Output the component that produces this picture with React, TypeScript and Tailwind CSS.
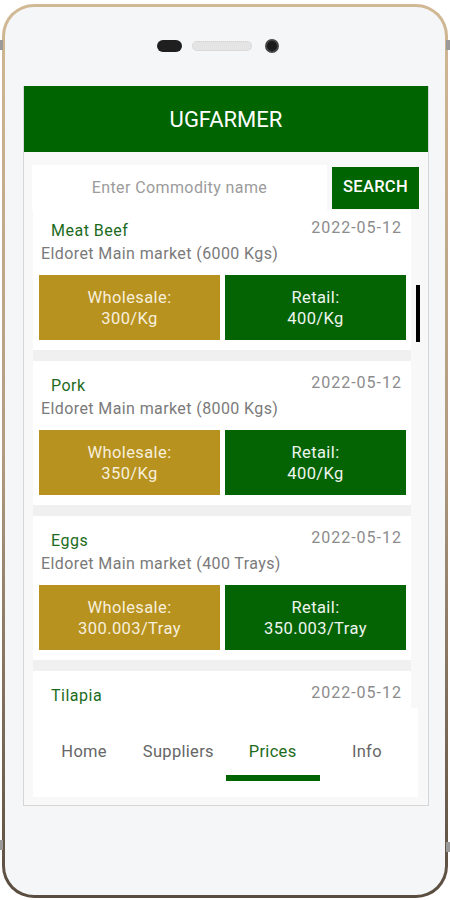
import React from "react";

type Item = {
  name: string;
  market: string;
  wholesale: string;
  retail: string;
  date: string;
};

const items: Item[] = [
  { name: "Meat Beef", market: "Eldoret Main market (6000 Kgs)", wholesale: "300/Kg", retail: "400/Kg", date: "2022-05-12" },
  { name: "Pork", market: "Eldoret Main market (8000 Kgs)", wholesale: "350/Kg", retail: "400/Kg", date: "2022-05-12" },
  { name: "Eggs", market: "Eldoret Main market (400 Trays)", wholesale: "300.003/Tray", retail: "350.003/Tray", date: "2022-05-12" },
  { name: "Tilapia", market: "Eldoret Main market (500 Kgs)", wholesale: "250/Kg", retail: "300/Kg", date: "2022-05-12" },
];

function Card({ item }: { item: Item }) {
  return (
    <div className="h-[144px] shrink-0 bg-white flex flex-col">
      <div className="flex justify-between items-start pt-[12px]">
        <span className="mt-[3px] pl-[18px] text-[16px] leading-[20px] text-[#1c6b1c] tracking-[0.5px]">{item.name}</span>
        <span className="pr-[9px] text-[16px] leading-[20px] text-[#8c8c8c] tracking-[1px]">{item.date}</span>
      </div>
      <div className="mt-[3px] pl-[8px] text-[16px] leading-[20px] text-[#7a7a7a] tracking-[0.4px]">{item.market}</div>
      <div className="mt-[11px] pl-[6px] pr-[5px] grid grid-cols-2 gap-[5px]">
        <div className="h-[65px] bg-[#b8921f] flex flex-col items-center justify-center text-[16.5px] leading-[21px] text-[#f6efdc] tracking-[0.4px]">
          <span>Wholesale:</span>
          <span>{item.wholesale}</span>
        </div>
        <div className="h-[65px] bg-[#046404] flex flex-col items-center justify-center text-[16.5px] leading-[21px] text-[#eef5ee] tracking-[0.4px]">
          <span>Retail:</span>
          <span>{item.retail}</span>
        </div>
      </div>
    </div>
  );
}

export default function App() {
  const tabs = ["Home", "Suppliers", "Prices", "Info"];
  return (
    <div className="w-[450px] h-[900px] bg-white pt-[4px] pl-[2px] overflow-hidden relative" style={{ fontFamily: "Roboto, 'Noto Sans', sans-serif" }}>
      {/* side buttons */}
      <div className="absolute left-0 top-[40px] w-[3px] h-[10px] bg-[#9a9a9a]" />
      <div className="absolute left-0 top-[840px] w-[3px] h-[10px] bg-[#9a9a9a]" />
      <div className="absolute right-0 top-[40px] w-[4px] h-[10px] bg-[#9a9a9a]" />
      <div className="absolute right-0 top-[842px] w-[4px] h-[10px] bg-[#9a9a9a]" />
      <div className="w-[446px] h-[894px] rounded-[32px] p-[3px] bg-gradient-to-b from-[#d2b995] via-[#b29c82] to-[#5a4d40]">
        <div className="h-full rounded-[29px] bg-[#f4f6f8] flex flex-col">
          {/* earpiece row */}
          <div className="pt-[32px] pl-[152px] flex items-center h-[46px]">
            <div className="w-[25px] h-[12px] rounded-full bg-[#1f1f1f]" />
            <div className="ml-[10px] w-[60px] h-[10px] rounded-full bg-[#e4e4e4] border border-[#cfcfcf] border-dotted" />
            <div className="ml-[13px] w-[14px] h-[14px] rounded-full bg-[#1a1a1a] border-[2px] border-[#444]" />
          </div>
          {/* screen */}
          <div className="mt-[33px] ml-[18px] w-[406px] h-[720px] border-x border-b border-[#d6d6d6] flex flex-col bg-[#f8f8f8]">
            <div className="h-[66px] bg-[#006400] flex items-center justify-center text-white text-[22px]">
              UGFARMER
            </div>
            <div className="relative flex-1 flex flex-col">
              <div className="pt-[13px] pl-[8px] flex items-center gap-[5px]">
                <div className="w-[295px] h-[45px] bg-white flex items-center justify-center text-[16px] text-[#9b9b9b] tracking-[0.4px]">
                  Enter Commodity name
                </div>
                <div className="w-[87px] h-[42px] bg-[#006400] flex items-center justify-center text-white text-[16.5px] font-medium tracking-[0.3px]">
                  SEARCH
                </div>
              </div>
              <div className="ml-[9px] w-[378px] h-[498px] overflow-hidden bg-[#f0f0f0]">
                <div className="-mt-[4px] flex flex-col gap-[11px]">
                  {items.map((it) => (
                    <Card key={it.name} item={it} />
                  ))}
                </div>
              </div>
              <div className="absolute left-[392px] top-[133px] w-[4px] h-[57px] bg-black" />
              <div className="ml-[9px] w-[385px] h-[89px] bg-white flex px-[4px]">
                {tabs.map((t) => (
                  <div key={t} className="flex-1 flex flex-col items-center pt-[34px]">
                    <span className={"text-[16.5px] leading-[20px] tracking-[0.3px] " + (t === "Prices" ? "text-[#1c6b1c]" : "text-[#666666]")}>{t}</span>
                    {t === "Prices" ? <div className="mt-[13px] w-full h-[6px] bg-[#006400]" /> : null}
                  </div>
                ))}
              </div>
            </div>
          </div>
        </div>
      </div>
    </div>
  );
}
